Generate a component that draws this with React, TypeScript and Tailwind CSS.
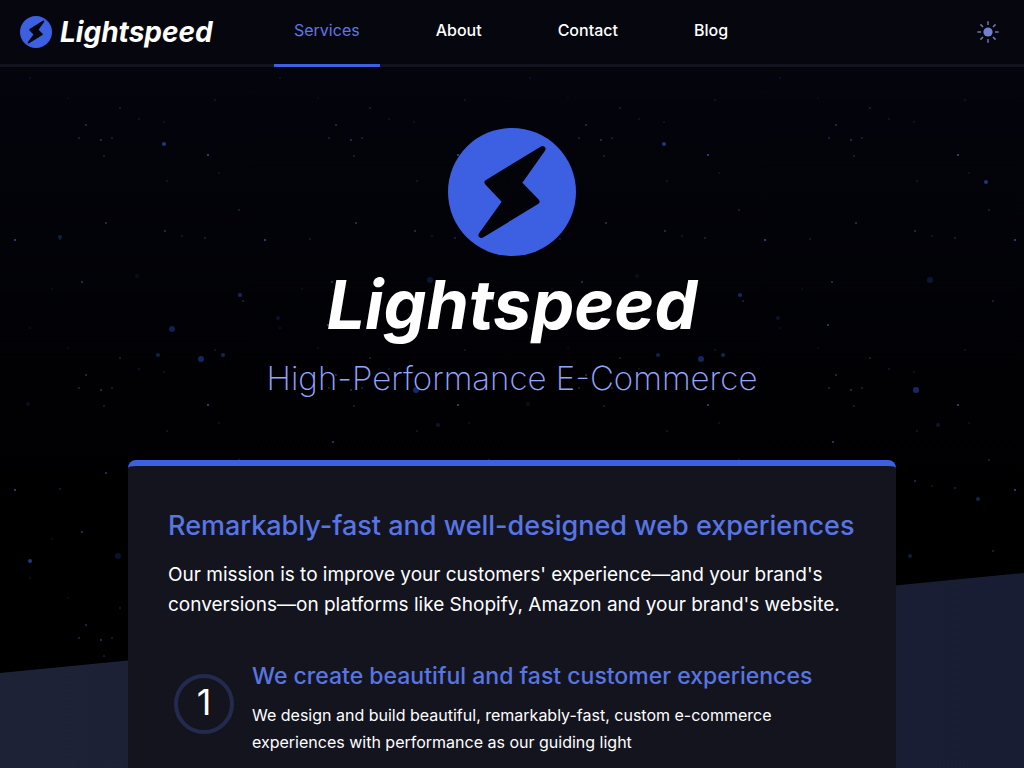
import { useId } from "react";

type Star = [x: number, y: number, r: number, fill: string];

const nearStars: Star[] = [
  [30, 78, 1, "#10102a"],
  [68, 98, 1, "#0b0b1a"],
  [120, 108, 1, "#1d1f38"],
  [215, 100, 1, "#14152c"],
  [139, 119, 1, "#14152c"],
  [164, 122, 1, "#11122a"],
  [86, 125, 1, "#2a2e55"],
  [79, 138, 1, "#222545"],
  [101, 140, 1, "#2d3260"],
  [112, 138, 1, "#1c1f3c"],
  [104, 156, 1, "#1c1f3c"],
  [208, 155, 1, "#414892"],
  [219, 173, 1, "#10122a"],
  [167, 181, 1, "#15172e"],
  [239, 210, 1, "#1f2244"],
  [106, 223, 1, "#2e3364"],
  [165, 231, 1, "#2a2f5c"],
  [182, 236, 1, "#15172e"],
  [205, 238, 1, "#1f2244"],
  [15, 240, 1, "#414892"],
  [60, 239, 1, "#181b34"],
  [82, 32, 1, "#2e3364"],
  [52, 39, 1, "#0c0d1c"],
  [243, 51, 1, "#1f2244"],
];

const farStars: Star[] = [
  [164, 144, 2, "#22347e"],
  [240, 295, 2, "#182660"],
  [158, 355, 2, "#102050"],
  [201, 359, 3, "#152560"],
  [223, 355, 2, "#142350"],
  [278, 318, 2, "#0b112c"],
  [137, 276, 2, "#0a0c1e"],
  [430, 280, 3, "#0a1636"],
  [416, 390, 3, "#182860"],
  [333, 442, 1, "#303c8c"],
  [328, 325, 1, "#3a4180"],
  [28, 404, 2, "#0b0c1e"],
  [438, 425, 2, "#10132a"],
];

const singleStars: Star[] = [
  [986, 182, 2, "#22367e"],
  [60, 237, 2, "#0b2340"],
  [172, 329, 3, "#102050"],
  [978, 499, 2, "#122550"],
  [910, 556, 2, "#0e1c42"],
  [118, 556, 3, "#08122c"],
  [30, 561, 2, "#22387e"],
];

const steps = [
  {
    title: "We create beautiful and fast customer experiences",
    text: "We design and build beautiful, remarkably-fast, custom e-commerce experiences with performance as our guiding light",
  },
];

const links = ["Services", "About", "Contact", "Blog"];

function Stars({ stars }: { stars: Star[] }) {
  return (
    <>
      {stars.map(([x, y, r, fill]) => (
        <circle key={`${x}-${y}`} cx={x} cy={y} r={r} fill={fill} />
      ))}
    </>
  );
}

function Backdrop() {
  return (
    <svg className="absolute inset-0 -z-10 h-full w-full" aria-hidden="true">
      <defs>
        <linearGradient id="sky" x1="0" y1="0" x2="0" y2="1">
          <stop offset="0" stopColor="#04050e" />
          <stop offset="0.65" stopColor="#000001" />
          <stop offset="1" stopColor="#000000" />
        </linearGradient>
        <linearGradient id="ground" x1="0" y1="0" x2="1" y2="0">
          <stop offset="0" stopColor="#1d2237" />
          <stop offset="1" stopColor="#191d33" />
        </linearGradient>
        <pattern id="near" width="250" height="250" patternUnits="userSpaceOnUse">
          <Stars stars={nearStars} />
        </pattern>
        <pattern id="far" width="500" height="500" patternUnits="userSpaceOnUse">
          <Stars stars={farStars} />
        </pattern>
      </defs>
      <rect width="100%" height="100%" fill="url(#sky)" />
      <rect width="100%" height="100%" fill="url(#near)" />
      <rect width="100%" height="100%" fill="url(#far)" />
      <Stars stars={singleStars} />
      <svg width="100%" height="100%" viewBox="0 0 1024 768" preserveAspectRatio="none">
        <path d="M0 673L1024 573V768H0Z" fill="url(#ground)" />
      </svg>
    </svg>
  );
}

function Logo({ className }: { className: string }) {
  const id = useId();
  return (
    <svg viewBox="0 0 128 128" className={className} aria-hidden="true">
      <mask id={id}>
        <rect width="128" height="128" fill="white" />
        <path
          d="M94.5 21L39.5 54.5L57.5 73.5L33.5 107L88.5 73.5L70.5 55Z"
          fill="black"
          stroke="black"
          strokeWidth="6"
          strokeLinejoin="round"
        />
      </mask>
      <circle cx="64" cy="64" r="64" fill="#3d60e3" mask={`url(#${id})`} />
    </svg>
  );
}

function SunIcon() {
  return (
    <svg viewBox="0 0 24 24" className="size-6" aria-hidden="true">
      <circle cx="12" cy="12" r="4.6" fill="#6f82cf" />
      <path
        d="M12 1.3V5M12 19V22.7M1.3 12H5M19 12H22.7M4.4 4.4L7 7M17 17L19.6 19.6M4.4 19.6L7 17M17 7L19.6 4.4"
        stroke="#6d779f"
        strokeWidth="1.5"
        fill="none"
      />
    </svg>
  );
}

export default function App() {
  return (
    <div className="relative isolate flex min-h-screen flex-col bg-black font-['Inter',sans-serif] text-white">
      <Backdrop />
      <header className="flex h-[67px] border-b-3 border-[#12131e] bg-[#05060e] px-6">
        <a href="#home" className="-ml-1 flex items-center gap-2">
          <Logo className="size-8" />
          <span className="w-[178px] text-[28px] leading-8 font-bold italic">Lightspeed</span>
        </a>
        <nav className="ml-9 flex flex-1 gap-9">
          {links.map((label, i) => (
            <a
              key={label}
              href={`#${label.toLowerCase()}`}
              aria-current={i === 0 ? "page" : undefined}
              className={
                i === 0
                  ? "-mb-[3px] flex items-center border-b-3 border-[#3d60e3] px-5 pb-1 text-base text-[#5b78e5]"
                  : "-mb-[3px] flex items-center border-b-3 border-transparent px-5 pb-1 text-base font-medium"
              }
            >
              {label}
            </a>
          ))}
        </nav>
        <button type="button" aria-label="Toggle theme" className="self-center">
          <SunIcon />
        </button>
      </header>

      <main className="flex flex-1 flex-col items-center">
        <section className="flex flex-col items-center pt-[61px] pb-[62px] text-center">
          <Logo className="size-32" />
          <h1 className="mt-2 text-[68px] leading-[80px] font-bold italic">Lightspeed</h1>
          <p className="mt-3.5 text-[33px] leading-10 font-extralight text-[#94a5ff]">
            High-Performance E-Commerce
          </p>
        </section>

        <section className="w-3/4 flex-1 rounded-t-lg border-t-6 border-[#3d60e3] bg-[#14141f] px-10 pt-10">
          <h2 className="text-[27px] leading-10 font-medium whitespace-nowrap text-[#5875e2]">
            Remarkably-fast and well-designed web experiences
          </h2>
          <p className="mt-3.5 text-[19px] leading-[30px]">
            Our mission is to improve your customers' experience—and your brand's conversions—on
            platforms like Shopify, Amazon and your brand's website.
          </p>
          <ol className="mt-10">
            {steps.map((step, i) => (
              <li key={step.title} className="flex items-start gap-[18px]">
                <div className="mt-3.5 ml-1.5 flex size-15 shrink-0 items-center justify-center rounded-full border-4 border-[#242a4d] pb-1 text-4xl">
                  {i + 1}
                </div>
                <div>
                  <h3 className="text-[23px] leading-8 font-medium text-[#5875e2]">
                    {step.title}
                  </h3>
                  <p className="mt-2.5 max-w-[540px] text-base leading-[27px]">{step.text}</p>
                </div>
              </li>
            ))}
          </ol>
        </section>
      </main>
    </div>
  );
}
